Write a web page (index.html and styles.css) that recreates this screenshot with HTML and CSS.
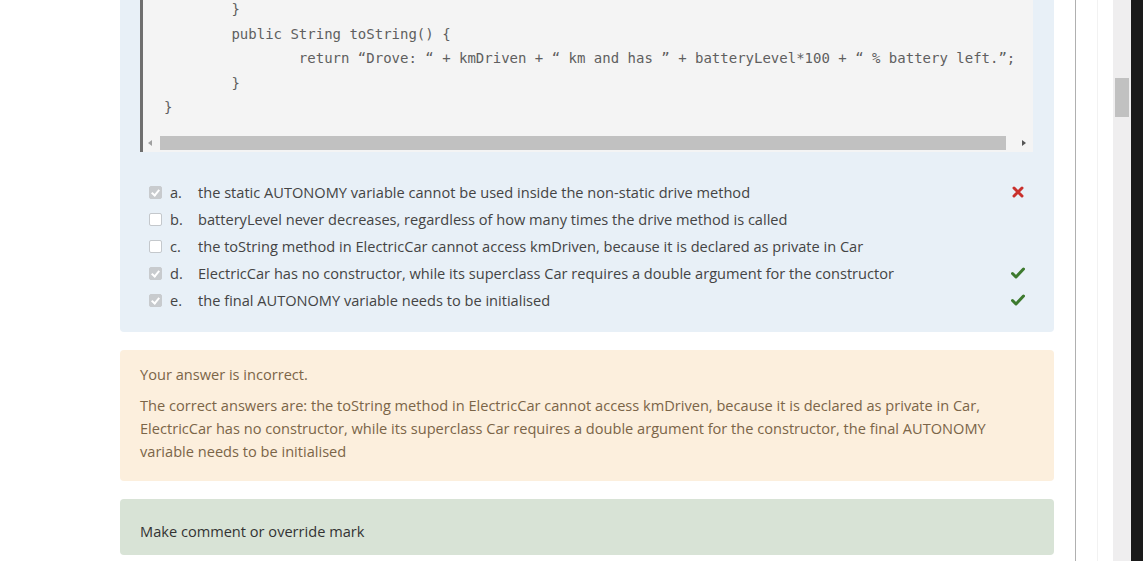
FILE: index.html
```html
<!DOCTYPE html>
<html>
<head>
<meta charset="utf-8">
<link rel="stylesheet" href="styles.css">
</head>
<body>
<div class="page">
  <main class="main">
    <section class="question">
      <div class="code">
<pre class="code-text">        }
        public String toString() {
                return “Drove: “ + kmDriven + “ km and has ” + batteryLevel*100 + “ % battery left.”;
        }
}</pre>
        <div class="hscroll">
          <span class="arrow arrow-left"></span>
          <span class="thumb"></span>
          <span class="arrow arrow-right"></span>
        </div>
      </div>
      <ul class="options">
        <li class="option"><span class="cb checked"></span><span class="letter">a.</span><span class="otext">the static AUTONOMY variable cannot be used inside the non-static drive method</span><span class="mark">
          <svg width="12" height="12" viewBox="0 0 12 12"><path d="M2 2 L10 10 M10 2 L2 10" stroke="#c9302c" stroke-width="3" stroke-linecap="round"/></svg></span></li>
        <li class="option"><span class="cb"></span><span class="letter">b.</span><span class="otext">batteryLevel never decreases, regardless of how many times the drive method is called</span><span class="mark"></span></li>
        <li class="option"><span class="cb"></span><span class="letter">c.</span><span class="otext">the toString method in ElectricCar cannot access kmDriven, because it is declared as private in Car</span><span class="mark"></span></li>
        <li class="option"><span class="cb checked"></span><span class="letter">d.</span><span class="otext">ElectricCar has no constructor, while its superclass Car requires a double argument for the constructor</span><span class="mark">
          <svg width="14" height="12" viewBox="0 0 14 12"><path d="M1.5 6.5 L5 10 L12.5 2" fill="none" stroke="#3d7a2e" stroke-width="3" stroke-linecap="round" stroke-linejoin="round"/></svg></span></li>
        <li class="option"><span class="cb checked"></span><span class="letter">e.</span><span class="otext">the final AUTONOMY variable needs to be initialised</span><span class="mark">
          <svg width="14" height="12" viewBox="0 0 14 12"><path d="M1.5 6.5 L5 10 L12.5 2" fill="none" stroke="#3d7a2e" stroke-width="3" stroke-linecap="round" stroke-linejoin="round"/></svg></span></li>
      </ul>
    </section>
    <section class="feedback">
      <p class="fb-line">Your answer is incorrect.</p>
      <p class="fb-line">The correct answers are: the toString method in ElectricCar cannot access kmDriven, because it is declared as private in Car, ElectricCar has no constructor, while its superclass Car requires a double argument for the constructor, the final AUTONOMY variable needs to be initialised</p>
    </section>
    <section class="comment">Make comment or override mark</section>
  </main>
  <div class="divider"></div>
  <div class="gutter"><div class="gutter-line"></div></div>
  <div class="vscroll"><div class="vthumb"></div></div>
  <div class="edge"></div>
</div>
</body>
</html>
```
FILE: styles.css
```css
html, body {
  margin: 0;
  padding: 0;
  background: #ffffff;
}
body {
  font-family: "Open Sans", "Noto Sans", sans-serif;
  font-size: 14.6px;
  color: #444;
  overflow: hidden;
}
.page {
  display: flex;
  height: 561px;
  overflow: hidden;
}
.main {
  width: 1075px;
  flex: none;
  box-sizing: border-box;
  padding: 0 21px 0 120px;
  display: flex;
  flex-direction: column;
  gap: 18px;
}
.question {
  background: #e8f0f7;
  border-radius: 0 0 4px 4px;
  margin-top: -28px;
  padding: 0 21px 18px 20px;
}
.code {
  background: #f4f4f4;
  border-left: 3px solid #6f6f6f;
  display: flex;
  flex-direction: column;
}
.code-text {
  margin: 0;
  padding: 25px 0 0 21px;
  font-family: "DejaVu Sans Mono", "Liberation Mono", monospace;
  font-size: 14px;
  line-height: 24.5px;
  color: #5f5f5f;
  white-space: pre;
  overflow: hidden;
}
.hscroll {
  margin-top: 16px;
  height: 14px;
  display: flex;
  align-items: center;
  padding: 0 7px 2px 5px;
}
.arrow {
  width: 0;
  height: 0;
  border-top: 3px solid transparent;
  border-bottom: 3px solid transparent;
  flex: none;
}
.arrow-left {
  border-right: 4px solid #a0a0a0;
  margin-right: 8px;
}
.arrow-right {
  border-left: 4px solid #555;
  margin-left: 16px;
}
.thumb {
  flex: 1;
  height: 14px;
  background: #c1c1c1;
}
.options {
  list-style: none;
  margin: 27px 0 0 0;
  padding: 0;
}
.option {
  display: flex;
  align-items: center;
  height: 27px;
}
.cb {
  width: 11px;
  height: 11px;
  border: 1px solid #c4c8cc;
  border-radius: 2px;
  background: #fff;
  margin-left: 9px;
  margin-right: 8px;
  flex: none;
  position: relative;
}
.cb.checked {
  background: #c8cbce;
  border-color: #c8cbce;
}
.cb.checked::after {
  content: "";
  position: absolute;
  left: 3px;
  top: 1px;
  width: 3px;
  height: 6px;
  border-right: 2px solid #fff;
  border-bottom: 2px solid #fff;
  transform: rotate(40deg);
}
.letter {
  width: 28px;
  flex: none;
  color: #444;
}
.otext {
  flex: 1;
  color: #444;
}
.mark {
  width: 14px;
  flex: none;
  display: flex;
  justify-content: center;
  margin-right: 8px;
}
.feedback {
  background: #fcefdd;
  border-radius: 4px;
  padding: 13px 20px 18px 20px;
  color: #7b6548;
  line-height: 23px;
}
.fb-line {
  margin: 0;
}
.fb-line + .fb-line {
  margin-top: 8px;
}
.comment {
  background: #d8e3d6;
  border-radius: 4px;
  padding: 21px 20px 12px 20px;
  line-height: 23px;
  color: #333;
}
.divider {
  width: 1px;
  background: #b0b0b0;
  flex: none;
}
.gutter {
  width: 37px;
  flex: none;
  display: flex;
  padding-left: 21px;
  box-sizing: border-box;
}
.gutter-line {
  width: 1px;
  background: #f2f2f2;
}
.vscroll {
  width: 18px;
  flex: none;
  background: #efeeef;
  padding-top: 78px;
  box-sizing: border-box;
}
.vthumb {
  width: 14px;
  height: 39px;
  margin-left: 2px;
  background: #c1c1c1;
}
.edge {
  flex: 1;
  background: #1a1a1a;
}
```
